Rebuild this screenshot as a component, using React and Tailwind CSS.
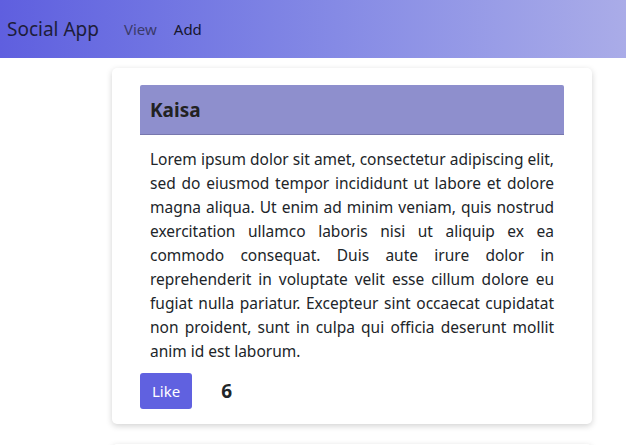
export default function App() {
  const text =
    "Lorem ipsum dolor sit amet, consectetur adipiscing elit, sed do eiusmod tempor incididunt ut labore et dolore magna aliqua. Ut enim ad minim veniam, quis nostrud exercitation ullamco laboris nisi ut aliquip ex ea commodo consequat. Duis aute irure dolor in reprehenderit in voluptate velit esse cillum dolore eu fugiat nulla pariatur. Excepteur sint occaecat cupidatat non proident, sunt in culpa qui officia deserunt mollit anim id est laborum.";

  return (
    <div className="h-screen overflow-hidden bg-white font-['Noto_Sans',sans-serif] text-[#212529]">
      <nav className="flex h-[58px] items-center bg-gradient-to-r from-[#5f5fdf] to-[#aaace8] px-[7px]">
        <span className="text-[19px] text-[#1d1d3a]">Social App</span>
        <div className="ml-[25px] flex gap-[17px] text-[15px]">
          <span className="text-[#3a3a6a]">View</span>
          <span className="text-[#16162e]">Add</span>
        </div>
      </nav>
      <div className="ml-[112px] flex w-[480px] flex-col gap-[20px] pt-[10px]">
        <div className="rounded-[5px] bg-white px-[28px] pt-[17px] pb-[15px] shadow-[0_2px_6px_rgba(0,0,0,0.18)]">
          <div className="flex h-[50px] items-center rounded-t-[2px] border-b border-[#7777ad] bg-[#8e8fcd] px-[10px] pt-[2px]">
            <h2 className="text-[19px] font-bold text-[#222]">Kaisa</h2>
          </div>
          <p className="px-[10px] pt-[12px] text-justify text-[15.5px] leading-[24px]">
            {text}
          </p>
          <div className="mt-[10px] flex items-center">
            <button className="h-[36px] rounded-[3px] bg-[#6061e0] px-[12px] text-[15px] text-white">
              Like
            </button>
            <span className="ml-[29px] text-[19px] font-bold">6</span>
          </div>
        </div>
        <div className="h-[40px] rounded-[5px] bg-white shadow-[0_2px_6px_rgba(0,0,0,0.18)]" />
      </div>
    </div>
  );
}
